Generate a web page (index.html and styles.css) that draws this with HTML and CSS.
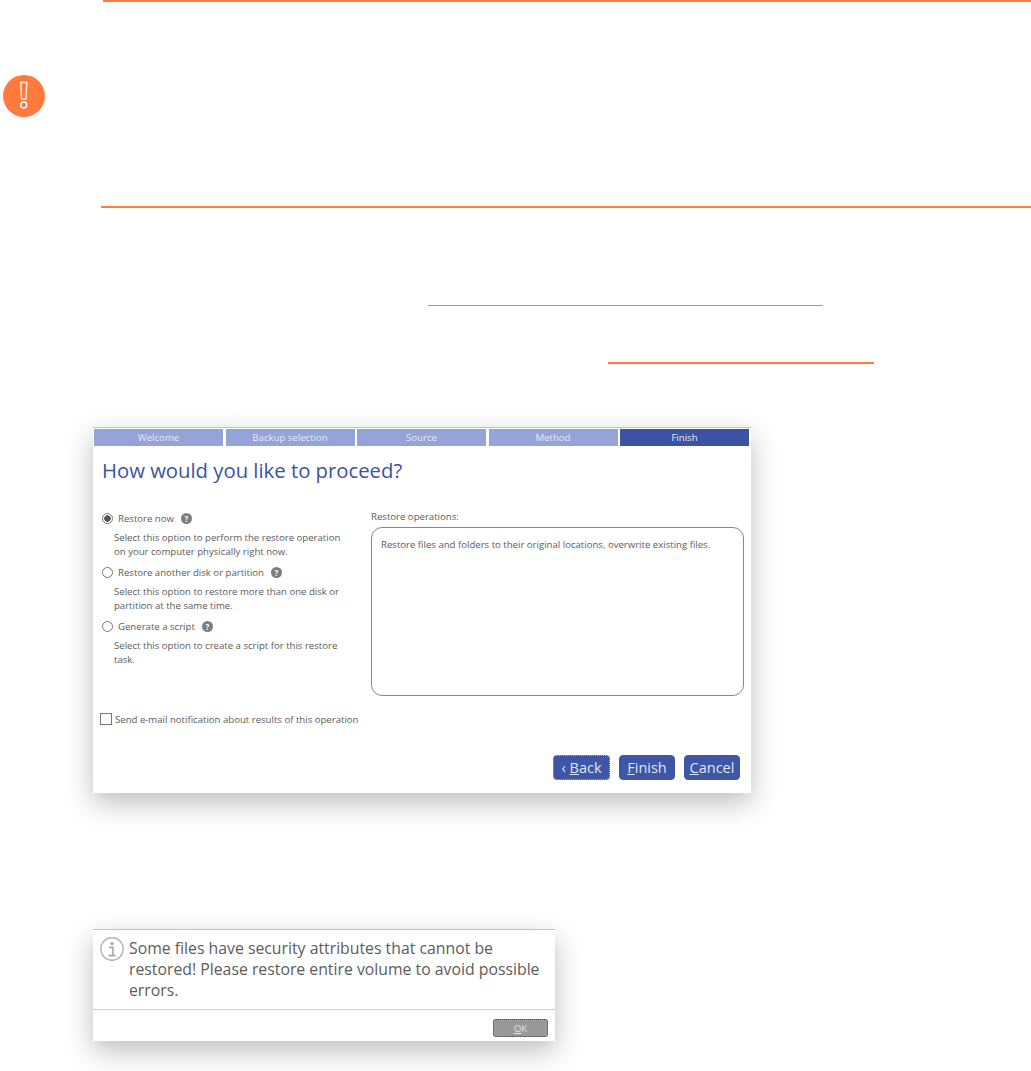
FILE: index.html
```html
<!DOCTYPE html>
<html lang="en">
  <head>
    <meta charset="UTF-8" />
    <meta name="viewport" content="width=device-width, initial-scale=1.0" />
    <title>Restore wizard</title>
    <link rel="stylesheet" href="styles.css">
  </head>

  <body>
    <div class="notice">
      <svg class="notice-icon" width="42" height="42" viewBox="0 0 42 42">
        <circle cx="21" cy="21" r="21" fill="#ff7a3c" />
        <path d="M17.8 7.5h6l-.7 16.5h-4.6z" fill="none" stroke="#ffe6d8" stroke-width="1.4" />
        <circle cx="20.7" cy="30" r="3" fill="none" stroke="#fff" stroke-width="1.4" />
      </svg>
      <div class="notice-body">
        <div class="notice-rule notice-rule-top"></div>
        <div class="notice-rule"></div>
      </div>
    </div>

    <div class="link-line link-line-one"></div>
    <div class="link-line link-line-two"></div>

    <div class="dialog wizard">
      <div class="steps">
        <div class="step">Welcome</div>
        <div class="step">Backup selection</div>
        <div class="step">Source</div>
        <div class="step">Method</div>
        <div class="step active">Finish</div>
      </div>

      <h1 class="wizard-title">How would you like to proceed?</h1>

      <div class="wizard-main">
        <div class="options">
          <div class="option">
            <label class="option-label">
              <input type="radio" name="how" checked />
              <span>Restore now</span>
              <span class="help">?</span>
            </label>
            <p class="option-text">Select this option to perform the restore operation on your computer physically right now.</p>
          </div>
          <div class="option">
            <label class="option-label">
              <input type="radio" name="how" />
              <span>Restore another disk or partition</span>
              <span class="help">?</span>
            </label>
            <p class="option-text">Select this option to restore more than one disk or partition at the same time.</p>
          </div>
          <div class="option">
            <label class="option-label">
              <input type="radio" name="how" />
              <span>Generate a script</span>
              <span class="help">?</span>
            </label>
            <p class="option-text">Select this option to create a script for this restore task.</p>
          </div>
        </div>

        <div class="operations">
          <div class="operations-label">Restore operations:</div>
          <div class="operations-box">Restore files and folders to their original locations, overwrite existing files.</div>
        </div>
      </div>

      <label class="email-check">
        <input type="checkbox" />
        <span>Send e-mail notification about results of this operation</span>
      </label>

      <div class="wizard-buttons">
        <button class="btn focused">‹ <u>B</u>ack</button>
        <button class="btn"><u>F</u>inish</button>
        <button class="btn"><u>C</u>ancel</button>
      </div>
    </div>

    <div class="dialog message">
      <div class="message-body">
        <svg class="info-icon" width="24" height="24" viewBox="0 0 24 24">
          <circle cx="12" cy="12" r="11.2" fill="none" stroke="#b5b5b5" stroke-width="1.4" />
          <circle cx="12" cy="6.6" r="1.7" fill="#a8a8a8" />
          <path d="M9.2 10.4h3.7v7.6M8.6 18.6h7" fill="none" stroke="#a8a8a8" stroke-width="1.6" />
        </svg>
        <p class="message-text">Some files have security attributes that cannot be restored! Please restore entire volume to avoid possible errors.</p>
      </div>
      <div class="message-footer">
        <button class="btn-ok"><u>O</u>K</button>
      </div>
    </div>
  </body>
</html>
```

FILE: styles.css
```css
body {
  font-family: "Open Sans", "Noto Sans", Arial, sans-serif;
  background-color: #ffffff;
  color: #5c5c5c;
  margin: 0;
  padding: 0 0 30px;
}

.notice {
  display: flex;
  height: 208px;
  padding-left: 3px;
}

.notice-icon {
  flex: none;
  margin-top: 75px;
}

.notice-body {
  flex: 1;
  display: flex;
  flex-direction: column;
  justify-content: space-between;
  margin-left: 56px;
}

.notice-rule {
  height: 2px;
  background-color: #ff7a3c;
}

.notice-rule-top {
  margin-left: 2px;
}

.link-line {
  background-color: #ff7a3c;
}

.link-line-one {
  width: 395px;
  height: 1px;
  margin: 97px 0 0 428px;
}

.link-line-two {
  width: 266px;
  height: 2px;
  margin: 56px 0 0 608px;
}

.dialog {
  background-color: #ffffff;
  border-top: 1px solid #c2c2c2;
  margin-left: 93px;
  box-shadow: 0 10px 26px rgba(0, 0, 0, 0.26);
  box-sizing: border-box;
}

.wizard {
  width: 658px;
  height: 366px;
  margin-top: 63px;
}

.steps {
  display: grid;
  grid-template-columns: repeat(5, 1fr);
  column-gap: 2.5px;
  padding: 1px 2px 0 1px;
}

.step {
  height: 16.5px;
  line-height: 17px;
  background-color: #94a3d8;
  color: #e4e9f7;
  font-size: 9.6px;
  text-align: center;
}

.step.active {
  background-color: #3a53a4;
  color: #e8ecfa;
}

.wizard-title {
  margin: 11px 0 0 9px;
  font-size: 20.3px;
  line-height: 27px;
  font-weight: 400;
  color: #3a53a4;
}

.wizard-main {
  display: flex;
  height: 186px;
  margin-top: 26.5px;
}

.options {
  width: 269px;
  margin-left: 9px;
}

.option {
  height: 54px;
}

.option-label {
  display: flex;
  align-items: center;
  height: 16px;
  font-size: 9.6px;
}

.option-label input {
  appearance: none;
  width: 11px;
  height: 11px;
  margin: 0 5px 0 0;
  border: 1px solid #777777;
  border-radius: 50%;
  background-color: #ffffff;
}

.option-label input:checked {
  background: radial-gradient(circle, #555555 0 3px, #ffffff 3.5px);
}

.help {
  width: 11px;
  height: 11px;
  margin-left: 7px;
  border-radius: 50%;
  background-color: #7d7d7d;
  color: #ffffff;
  font-size: 8px;
  font-weight: 700;
  line-height: 11px;
  text-align: center;
}

.option-text {
  width: 232px;
  margin: 5px 0 0 12px;
  font-size: 9.6px;
  line-height: 13.5px;
}

.operations {
  width: 373px;
}

.operations-label {
  height: 17px;
  font-size: 9.6px;
  line-height: 14px;
}

.operations-box {
  box-sizing: border-box;
  height: 169px;
  padding: 10px 9px;
  border: 1px solid #888888;
  border-radius: 11px;
  font-size: 9.6px;
  line-height: 13px;
}

.email-check {
  display: flex;
  align-items: center;
  height: 16px;
  margin: 15px 0 0 7px;
  font-size: 9.6px;
}

.email-check input {
  appearance: none;
  width: 12px;
  height: 12px;
  margin: 0 3px 0 0;
  border: 1px solid #777777;
  background-color: #ffffff;
}

.wizard-buttons {
  display: flex;
  justify-content: flex-end;
  gap: 9px;
  margin-top: 28px;
  padding-right: 11px;
}

.btn {
  box-sizing: border-box;
  width: 56px;
  height: 25px;
  padding: 0;
  border: 1px solid #3f55a5;
  border-radius: 4px;
  background-color: #3f55a5;
  color: #dfe6f8;
  font-family: inherit;
  font-size: 14.5px;
  line-height: 22px;
}

.btn.focused {
  width: 57px;
  border: 1px dotted #c9b45a;
}

.message {
  width: 462px;
  height: 112px;
  margin-top: 136px;
}

.message-body {
  display: flex;
  height: 80px;
  padding: 7px 0 0 7px;
  box-sizing: border-box;
  border-bottom: 1px solid #cfcfcf;
}

.info-icon {
  flex: none;
}

.message-text {
  margin: 1px 0 0 5px;
  width: 420px;
  font-size: 15.8px;
  line-height: 21px;
}

.message-footer {
  display: flex;
  justify-content: flex-end;
  padding: 9px 7px 0 0;
}

.btn-ok {
  box-sizing: border-box;
  width: 55px;
  height: 18px;
  padding: 0;
  border: 1px dotted #444444;
  border-radius: 3px;
  background-color: #999999;
  color: #e4e4e4;
  font-family: inherit;
  font-size: 9.5px;
  line-height: 15px;
}
```
